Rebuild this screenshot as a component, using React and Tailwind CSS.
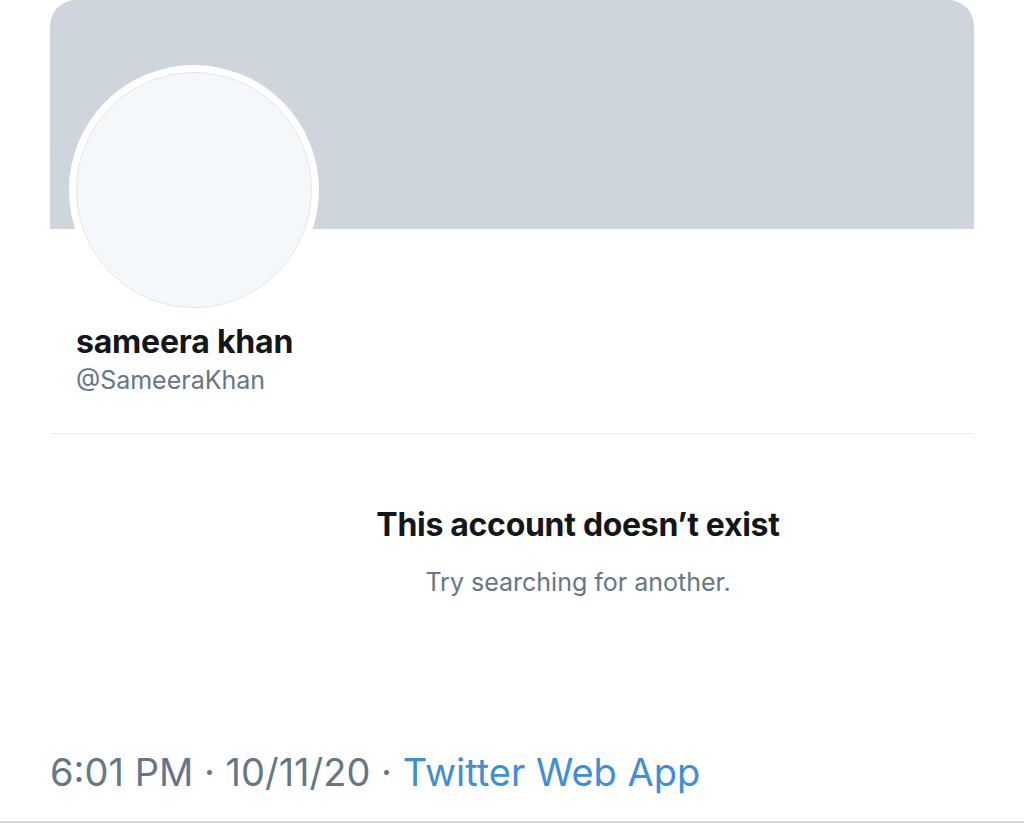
export default function App() {
  return (
    <div
      className="h-[834px] w-[1024px] overflow-hidden bg-white"
      style={{ fontFamily: "Inter, 'Noto Sans', sans-serif" }}
    >
      <div className="mx-[50px]">
        <div className="h-[229px] rounded-t-[26px] bg-[#cfd5dc]" />

        <div className="relative -mt-[164px] ml-[19px] h-[250px] w-[250px] rounded-full bg-white p-[7px]">
          <div className="h-full w-full rounded-full border border-[#e3e6ea] bg-[#f5f8fa]" />
        </div>

        <div className="pl-[26px] pt-[8px]">
          <p className="text-[32px] font-bold leading-[38px] tracking-[-0.2px] text-[#14171a]">sameera khan</p>
          <p className="mt-[4px] text-[25px] leading-[30px] text-[#657786]">@SameeraKhan</p>
        </div>

        <div className="mt-[38px] border-t border-[#e6ecf0]" />

        <div className="flex flex-col items-center pl-[132px] pt-[72px]">
          <p className="text-[32px] font-bold leading-[38px] tracking-[-0.3px] text-[#14171a]">
            This account doesn’t exist
          </p>
          <p className="mt-[23px] text-[25px] leading-[30px] text-[#657786]">Try searching for another.</p>
        </div>

        <p className="mt-[152px] text-[38px] leading-[46px] text-[#657786]">
          6:01 PM · 10/11/20 · <span className="text-[#3e8ed8]">Twitter Web App</span>
        </p>
      </div>
      <div className="mt-[26px] border-t-2 border-[#d6d6d6]" />
    </div>
  );
}
